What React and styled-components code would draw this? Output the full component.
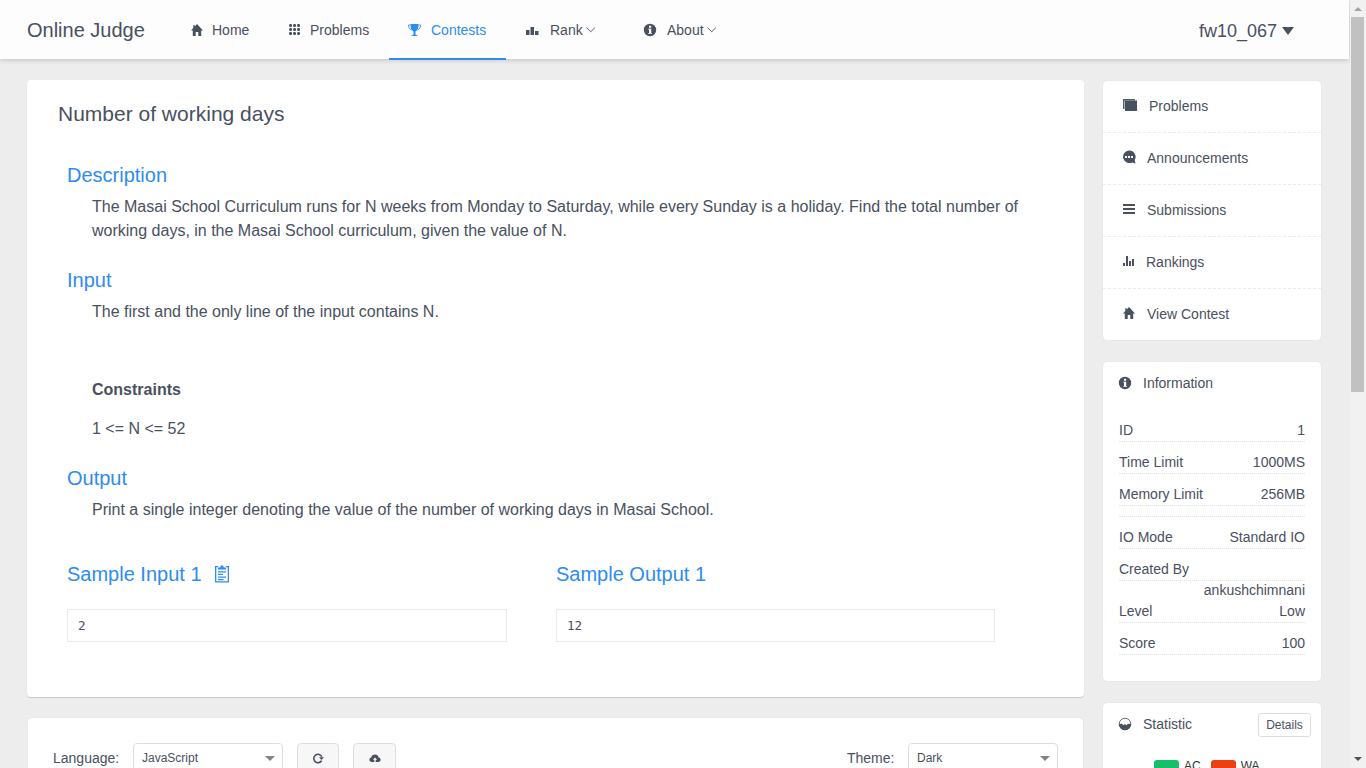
import React from 'react';
import styled, { createGlobalStyle, css } from 'styled-components';

const Global = createGlobalStyle`
  *, *::before, *::after { box-sizing: border-box; }
  html, body { margin: 0; height: 768px; overflow: hidden; }
  body { font: 14px/21px "Liberation Sans", Arial, sans-serif; color: #495060; background: #ededed; }
  h1, h2, p, dl, dd, dt, pre { margin: 0; font-weight: 400; }
`;

const Screen = styled.div`
  display: flex;
  height: 768px;
  overflow: hidden;
`;
const Page = styled.div`
  width: 1350px;
  flex: none;
  display: flex;
  flex-direction: column;
`;
const Header = styled.header`
  width: 1349px;
  height: 59px;
  flex: none;
  display: flex;
  background: #fdfdfd;
  box-shadow: 0 1px 5px 0 rgba(0, 0, 0, 0.2);
  line-height: 60px;
`;
const Brand = styled.div`
  width: 172px;
  padding-left: 27px;
  font-size: 20px;
`;
const NavItem = styled.a`
  width: ${(p) => p.$w}px;
  height: 60px;
  padding: 2px 0 0 ${(p) => p.$pad || 18}px;
  display: flex;
  align-items: center;
  border-bottom: 2px solid transparent;
  line-height: 56px;
  ${(p) => p.$active && css`color: #2d8cf0; border-color: #2d8cf0;`}
`;
const Glyph = styled.svg`
  width: ${(p) => p.$s || 14}px;
  height: ${(p) => p.$s || 14}px;
  margin-right: ${(p) => p.$gap || 0}px;
  flex: none;
  fill: currentColor;
`;
const User = styled.div`
  margin-left: auto;
  padding-right: 55px;
  display: flex;
  align-items: center;
  gap: 5px;
  height: 60px;
  padding-top: 1px;
  font-size: 18px;
`;
const Content = styled.div`
  display: flex;
  gap: 19px;
  padding: 21px 0 0 27px;
`;
const Main = styled.main`
  width: 1057px;
`;
const Panel = styled.section`
  background: #fff;
  border-radius: 4px;
  box-shadow: 0 0 1px rgba(0, 0, 0, 0.16);
`;
const Problem = styled(Panel)`
  height: 617px;
  padding: 20px 40px 0;
  box-shadow: 0 1px 1px rgba(0, 0, 0, 0.15);
`;
const Title = styled.h1`
  margin-left: -9px;
  font-size: 21px;
  line-height: 28px;
`;
const Heading = styled.h2`
  display: flex;
  align-items: center;
  margin-top: ${(p) => p.$top}px;
  color: #2d8cf0;
  font-size: 20px;
  line-height: 30px;
`;
const Text = styled.p`
  margin: ${(p) => p.$top || 5}px 0 0 25px;
  width: 952px;
  font-size: 16px;
  line-height: 24px;
`;
const Samples = styled.div`
  display: grid;
  grid-template-columns: 440px 439px;
  column-gap: 49px;
  margin-top: 37px;
`;
const Sample = styled.pre`
  height: 33px;
  margin-top: 20px;
  padding: 0 10px;
  border: 1px solid #e9eaec;
  font: 12.6px/31px "DejaVu Sans Mono", monospace;
`;
const Editor = styled(Panel)`
  display: flex;
  width: 1055px;
  height: 80px;
  margin: 21px 0 0 1px;
  padding: 25px 25px 0;
  line-height: 30px;
`;
const Label = styled.span`
  width: ${(p) => p.$w}px;
`;
const Select = styled.div`
  width: 150px;
  height: 32px;
  padding: 0 7px 1px 8px;
  display: flex;
  align-items: center;
  justify-content: space-between;
  border: 1px solid #dddee1;
  border-radius: 4px;
  font-size: 12px;
  line-height: 29px;
`;
const Caret = styled.span`
  width: 0;
  border: solid transparent;
  border-width: ${(p) => (p.$big ? '8px 6.5px 0' : '5px 5px 0')};
  border-top-color: ${(p) => (p.$big ? 'currentColor' : '#80848f')};
`;
const ToolButton = styled.button`
  width: ${(p) => p.$w}px;
  height: 32px;
  margin-left: 14px;
  padding: 0 0 2px;
  display: flex;
  align-items: center;
  justify-content: center;
  background: #f7f7f7;
  border: 1px solid #dddee1;
  border-radius: 4px;
  color: #495060;
`;
const Theme = styled.div`
  display: flex;
  margin-left: auto;
`;
const Aside = styled.aside`
  width: 218px;
  padding-top: 1px;
`;
const Menu = styled(Panel)`
  height: 259px;
`;
const MenuItem = styled.a`
  display: flex;
  align-items: center;
  height: ${(p) => (p.$last ? 51 : 52)}px;
  padding-left: ${(p) => p.$pad}px;
  border-bottom: ${(p) => (p.$last ? 0 : 1)}px dashed #e9eaec;
  ${Glyph} { margin-bottom: 3px; }
`;
const Info = styled(Panel)`
  height: 319px;
  margin-top: 22px;
  padding: 11px 16px;
`;
const CardTitle = styled.h2`
  display: flex;
  align-items: center;
  margin-left: -1px;
  font-size: 14px;
  line-height: 21px;
  ${Glyph} { margin-bottom: 2px; }
`;
const Facts = styled.dl`
  margin-top: 26px;
`;
const Fact = styled.div`
  display: flex;
  flex-wrap: wrap;
  justify-content: space-between;
  height: 22px;
  margin-bottom: ${(p) => (p.$wide ? 20 : 10)}px;
  border-bottom: 1px dotted #e3e4e7;
`;
const Wide = styled.dd`
  width: 100%;
  text-align: right;
`;
const Gap = styled.div`
  height: 1px;
  margin-bottom: 10px;
  border-bottom: 1px dotted #e3e4e7;
`;
const Statistic = styled(Panel)`
  height: 100px;
  margin-top: 22px;
  padding: 9px 10px 0 16px;
`;
const StatHead = styled.div`
  display: flex;
  justify-content: space-between;
  align-items: center;
  height: 25px;
`;
const Details = styled.button`
  width: 53px;
  height: 24px;
  padding: 0;
  border: 1px solid #dddee1;
  border-radius: 3px;
  background: #fff;
  color: #495060;
  font: 12px "Liberation Sans", Arial, sans-serif;
`;
const Legend = styled.div`
  display: flex;
  align-items: center;
  gap: 5px;
  height: 16px;
  margin: 21px 0 0 35px;
  font-size: 12px;
  color: #333;
`;
const Swatch = styled.i`
  width: 25px;
  height: 14px;
  margin-left: ${(p) => p.$left || 0}px;
  margin-top: 2px;
  border-radius: 3px;
  background: ${(p) => p.$c};
`;
const Scrollbar = styled.div`
  width: 16px;
  flex: none;
  display: flex;
  flex-direction: column;
  align-items: center;
  background: #f1f1f1;
`;
const Arrow = styled.span`
  height: 17px;
  padding-top: ${(p) => (p.$down ? 6 : 7)}px;
  &::before {
    content: '';
    display: block;
    border: solid transparent;
    border-width: ${(p) => (p.$down ? '4px 4px 0' : '0 4px 4px')};
    ${(p) => (p.$down ? 'border-top-color: #505050' : 'border-bottom-color: #a3a3a3')};
  }
`;
const Thumb = styled.div`
  width: 13px;
  height: 375px;
  margin: 0 1px auto 0;
  background: #c1c1c1;
`;

const Home = (p) => (
  <Glyph viewBox="0 0 14 14" {...p}><path d="M7 1 13 7.500h-1.800V13H8.300V9H5.700v4H2.800V7.500H1L3.300 5V2.200h1.500v1.200Z" /></Glyph>
);
const Grid = (p) => (
  <Glyph viewBox="0 0 14 14" {...p}>
    {[2.5, 6.5, 10.5].map((y) => [2.5, 6.5, 10.5].map((x) => <rect key={x + '-' + y} x={x - 1.4} y={y - 1.4} width="2.9" height="2.9" rx="1.1" />))}
  </Glyph>
);
const Trophy = (p) => (
  <Glyph viewBox="0 0 15 15" {...p}>
    <path d="M3.500 1h8c0 4-.6 6-3 7.500v3c0 .5 2.200.6 2.200 1.500H4.300c0-.9 2.200-1 2.200-1.500v-3C4.100 7 3.500 5 3.500 1Z" />
    <path d="M3.500 2H1.500c.1 2.500.9 4.200 3 5M11.500 2h2c-.1 2.500-.9 4.200-3 5" fill="none" stroke="currentColor" strokeWidth=".9" />
  </Glyph>
);
const Podium = (p) => (
  <Glyph viewBox="0 0 15 15" {...p}><path d="M1 7h3.500v5H1ZM5.500 4H9v8H5.500ZM10 8h3.500v4H10Z" /></Glyph>
);
const InfoIcon = (p) => (
  <Glyph viewBox="0 0 14 14" {...p}>
    <circle cx="7" cy="7" r="6.2" />
    <path fill="#fff" d="M6 2.700h2.200v2H6ZM5.200 5.700h3v4.200h.8v.9H5.200v-.9H6V6.600h-.8Z" />
  </Glyph>
);
const Chevron = () => (
  <Glyph viewBox="0 0 14 14" $s={14}><path d="m3.400 4.500 4.300 4.300L12 4.500" fill="none" stroke="currentColor" strokeWidth=".9" /></Glyph>
);
const Albums = (p) => (
  <Glyph viewBox="0 0 14 14" {...p}><path d="M0 1h12v1.500H1.500V11H0Z" fill="#4a6658" /><path d="M2 2.500h12V13H2Z" /></Glyph>
);
const Chat = (p) => (
  <Glyph viewBox="0 0 14 14" {...p}>
    <path d="M7.100.5a6.500 6.300 0 0 1 5.600 9.500l.8 3.400-3.200-.9A6.500 6.300 0 1 1 7.100.5Z" />
    <path fill="#fff" d="M3 6h2v2H3Zm3 0h2v2H6Zm3 0h2v2H9Z" />
  </Glyph>
);
const Lines = (p) => (
  <Glyph viewBox="0 0 14 14" {...p}><path d="M1 2h12v2H1Zm0 4h12v2H1Zm0 4h12v2H1Z" /></Glyph>
);
const Bars = (p) => (
  <Glyph viewBox="0 0 14 14" {...p}><path d="M1 9h2v3H1Zm3-7h2v10H4Zm3 5h2v5H7Zm3-2h2v7h-2Z" /></Glyph>
);
const Pie = (p) => (
  <Glyph viewBox="0 0 14 14" {...p}>
    <circle cx="7" cy="7" r="5.800" fill="none" stroke="currentColor" strokeWidth=".8" />
    <path d="M.8 7 4 6.700 5.500 8.200 7 7l1.500 1.200L10 6.700l3.200.3A6.200 6.200 0 0 1 .8 7Z" />
  </Glyph>
);
const Clipboard = (p) => (
  <Glyph viewBox="0 0 18 18" {...p}>
    <path d="M2 1h3v1.300H3.300v14h11.400v-14H13V1h3v16.600H2Z" />
    <path d="M5 4.500V2.500h2.200L8 .4h2l.8 2.100H13v2ZM5 6.200h8v1.300H5Zm0 2.600h5v1.300H5Zm0 2.600h8v1.300H5Zm0 2.500h5.500v1.300H5Z" />
  </Glyph>
);
const Reload = () => (
  <Glyph viewBox="0 0 12 12" $s={12}>
    <path d="M9.600 8.600A4.200 4.200 0 1 1 9.800 4.800" fill="none" stroke="currentColor" strokeWidth="1.600" /><path d="M7 5.300h5L9.500 8Z" />
  </Glyph>
);
const Cloud = () => (
  <Glyph viewBox="0 0 12 12" $s={12}>
    <path d="M2.800 10C1.300 10 .4 9.100.4 7.800s.8-2 1.800-2.200C2.500 3.700 4 2.500 6 2.500s3.300 1.200 3.600 3c1.200.2 2 1 2 2.300 0 1.300-1 2.200-2.300 2.200H6.700V7.700h1.500L6 5.400 3.800 7.700h1.500V10Z" />
  </Glyph>
);

const menu = [
  ['Problems', Albums, 20, 12],
  ['Announcements', Chat, 19, 11],
  ['Submissions', Lines, 19, 11],
  ['Rankings', Bars, 19, 10],
  ['View Contest', Home, 19, 11],
];

export default function App() {
  return (
    <Screen>
      <Global />
      <Page>
        <Header>
          <Brand>Online Judge</Brand>
          <NavItem $w={98}><Home $gap={8} />Home</NavItem>
          <NavItem $w={119}><Grid $gap={8} />Problems</NavItem>
          <NavItem $w={117} $active><Trophy $s={15} $gap={9} />Contests</NavItem>
          <NavItem $w={118} $pad={19}><Podium $s={15} $gap={10} />Rank<Chevron /></NavItem>
          <NavItem $w={110} $pad={19}><InfoIcon $gap={10} />About<Chevron /></NavItem>
          <User>fw10_067<Caret $big /></User>
        </Header>
        <Content>
          <Main>
            <Problem>
              <Title>Number of working days</Title>
              <Heading $top={32}>Description</Heading>
              <Text>
                The Masai School Curriculum runs for N weeks from Monday to Saturday, while every Sunday is a holiday. Find the total number of<br />
                working days, in the Masai School curriculum, given the value of N.
              </Text>
              <Heading $top={22}>Input</Heading>
              <Text>The first and the only line of the input contains N.</Text>
              <Text $top={54}><b>Constraints</b></Text>
              <Text $top={15}>1 &lt;= N &lt;= 52</Text>
              <Heading $top={22}>Output</Heading>
              <Text>Print a single integer denoting the value of the number of working days in Masai School.</Text>
              <Samples>
                <div>
                  <Heading $top={0}><Label $w={146}>Sample Input 1</Label><Clipboard $s={18} /></Heading>
                  <Sample>2</Sample>
                </div>
                <div>
                  <Heading $top={0}>Sample Output 1</Heading>
                  <Sample>12</Sample>
                </div>
              </Samples>
            </Problem>
            <Editor>
              <Label $w={80}>Language:</Label>
              <Select>JavaScript<Caret /></Select>
              <ToolButton $w={42}><Reload /></ToolButton>
              <ToolButton $w={43}><Cloud /></ToolButton>
              <Theme><Label $w={61}>Theme:</Label><Select>Dark<Caret /></Select></Theme>
            </Editor>
          </Main>
          <Aside>
            <Menu>
              {menu.map(([name, Icon, pad, gap], i) => (
                <MenuItem key={name} $pad={pad} $last={i === 4}><Icon $gap={gap} />{name}</MenuItem>
              ))}
            </Menu>
            <Info>
              <CardTitle><InfoIcon $gap={11} />Information</CardTitle>
              <Facts>
                <Fact><dt>ID</dt><dd>1</dd></Fact>
                <Fact><dt>Time Limit</dt><dd>1000MS</dd></Fact>
                <Fact><dt>Memory Limit</dt><dd>256MB</dd></Fact>
                <Gap />
                <Fact><dt>IO Mode</dt><dd>Standard IO</dd></Fact>
                <Fact $wide><dt>Created By</dt><Wide>ankushchimnani</Wide></Fact>
                <Fact><dt>Level</dt><dd>Low</dd></Fact>
                <Fact><dt>Score</dt><dd>100</dd></Fact>
              </Facts>
            </Info>
            <Statistic>
              <StatHead><CardTitle><Pie $gap={11} />Statistic</CardTitle><Details>Details</Details></StatHead>
              <Legend><Swatch $c="#19be6b" />AC<Swatch $c="#ed3f14" $left={5} />WA</Legend>
            </Statistic>
          </Aside>
        </Content>
      </Page>
      <Scrollbar><Arrow /><Thumb /><Arrow $down /></Scrollbar>
    </Screen>
  );
}
